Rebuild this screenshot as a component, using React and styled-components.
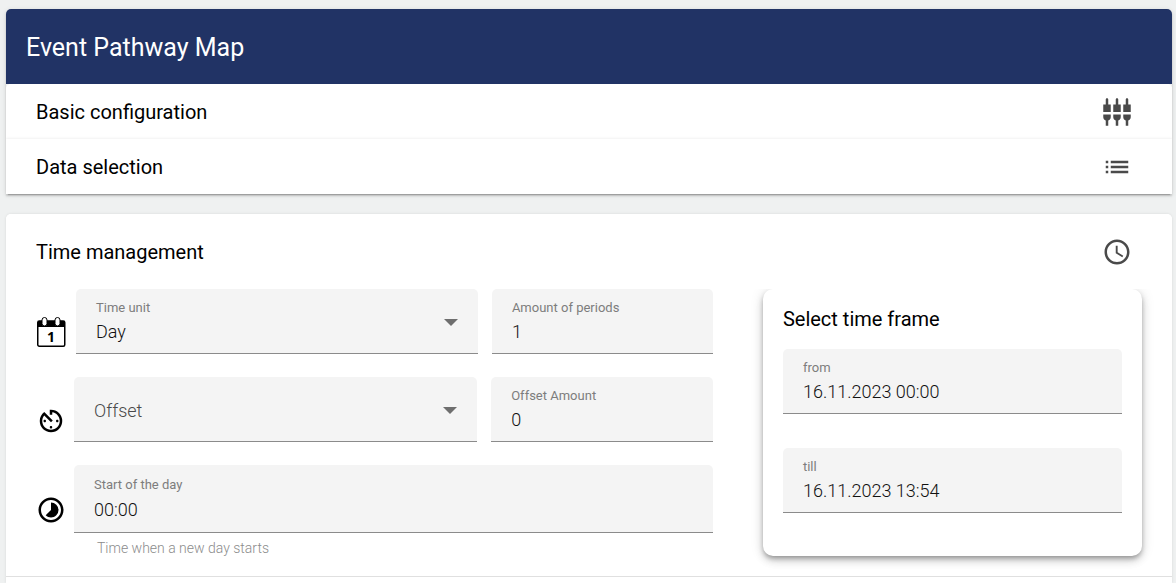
import React, { useState } from "react";
import styled, { createGlobalStyle } from "styled-components";
import {
  MdAvTimer,
  MdList,
  MdSchedule,
  MdSettingsInputComponent,
  MdTimelapse,
} from "react-icons/md";

const GlobalStyle = createGlobalStyle`
  * {
    box-sizing: border-box;
  }
  body {
    margin: 0;
    background: #eff1f1;
    color: #000;
    font-family: Roboto, "Liberation Sans", sans-serif;
  }
  button, input, select {
    font-family: inherit;
  }
`;

const Page = styled.main`
  display: flex;
  flex-direction: column;
  min-height: 100vh;
  padding: 9px 4px 0 6px;
`;

const elevation = `
  box-shadow: 0 3px 1px -2px rgba(0, 0, 0, 0.2), 0 2px 2px 0 rgba(0, 0, 0, 0.14),
    0 1px 5px 0 rgba(0, 0, 0, 0.12);
`;

const ConfigCard = styled.section`
  margin-bottom: 20px;
  border-radius: 5px 5px 0 0;
  ${elevation}
`;

const TitleBar = styled.header`
  padding: 23px 20px 20px;
  background: #213365;
  border-radius: 5px 5px 0 0;
  color: #fff;
`;

const Title = styled.h1`
  margin: 0;
  font-size: 25px;
  font-weight: 400;
  line-height: 32px;
`;

const PanelList = styled.div`
  overflow: hidden;
  background: #fff;
  border-radius: 5px 5px 0 0;
`;

const PanelHeader = styled.button`
  display: flex;
  align-items: center;
  justify-content: space-between;
  width: 100%;
  height: 55px;
  padding: 0 40px 0 30px;
  border: 0;
  background: #fff;
  color: #000;
  font-size: 20px;
  line-height: 32px;
  text-align: left;
  cursor: pointer;

  & + & {
    box-shadow: 0 0 3px rgba(0, 0, 0, 0.1);
  }
  svg {
    color: #4a4a4a;
  }
`;

const TimeCard = styled.section`
  flex: 1;
  padding-bottom: 6px;
  background: #fff;
  border-radius: 5px 5px 0 0;
  box-shadow: 0 0 3px rgba(0, 0, 0, 0.1);
`;

const TimeHeader = styled(PanelHeader)`
  height: 75px;
  border-radius: 5px 5px 0 0;
`;

const TimeBody = styled.div`
  display: grid;
  grid-template-columns: 25fr 14fr;
  gap: 50px;
  align-items: start;
  padding: 0 30px 18px;
  border-bottom: 1px solid #e0e0e0;
`;

const FieldRows = styled.div`
  display: grid;
  gap: 23px;
`;

const FieldRow = styled.div`
  display: flex;
  gap: 8px;
`;

const RowIcon = styled.span`
  display: flex;
  flex-shrink: 0;
  align-items: center;
  height: ${(p) => (p.$tall ? 68 : 65)}px;
  padding-top: 22px;
`;

const Fields = styled.div`
  display: grid;
  flex: 1;
  grid-template-columns: 20fr 11fr;
  gap: 14px;
  min-width: 0;
`;

const FieldBox = styled.div`
  position: relative;
  display: flex;
  flex-direction: column;
  justify-content: center;
  gap: ${(p) => (p.$tall ? 2 : 0)}px;
  min-width: 0;
  height: ${(p) => (p.$tall ? 68 : 65)}px;
  padding: 2px 20px 0;
  background: #f4f4f4;
  border-bottom: 1px solid #8b8b8b;
  border-radius: 5px 5px 0 0;
`;

const FieldLabel = styled.label`
  color: #7d7d7d;
  font-size: 13px;
  line-height: 18px;
`;

const FieldInput = styled.input`
  width: 100%;
  height: 28px;
  padding: 0;
  border: 0;
  outline: 0;
  background: transparent;
  color: #111;
  font-size: 18px;
  font-weight: 300;
`;

const FieldSelect = styled.select`
  width: 100%;
  height: 28px;
  padding: 0;
  border: 0;
  outline: 0;
  appearance: none;
  background: transparent;
  color: ${(p) => (p.$empty ? "#4a4a4a" : "#111")};
  font-size: 18px;
  font-weight: 300;
`;

const Arrow = styled.span`
  position: absolute;
  top: 30px;
  right: 20px;
  border: 7px solid transparent;
  border-top-color: #6e6e6e;
  border-bottom: 0;
  pointer-events: none;
`;

const Hint = styled.p`
  margin: 5px 0 0;
  padding: 0 23px;
  color: #8c8c8c;
  font-size: 14px;
  font-weight: 300;
  line-height: 20px;
`;

const DayStart = styled.div`
  flex: 1;
  min-width: 0;
`;

const FrameCard = styled.fieldset`
  display: grid;
  gap: 34px;
  min-width: 0;
  margin: 0;
  padding: 14px 20px 43px;
  border: 0;
  border-radius: 10px;
  box-shadow: 0 3px 5px -1px rgba(0, 0, 0, 0.3), 0 5px 8px 0 rgba(0, 0, 0, 0.14),
    0 1px 14px 0 rgba(0, 0, 0, 0.12);
  clip-path: inset(0 -20px -20px -20px);
`;

const FrameTitle = styled.legend`
  float: left;
  padding: 0;
  margin-bottom: -20px;
  font-size: 20px;
  line-height: 32px;
`;

function CalendarIcon() {
  return (
    <svg width="32" height="32" viewBox="0 0 32 32" aria-hidden="true">
      <rect x="1.75" y="4" width="27" height="25.25" rx="1.5" fill="#fff" stroke="#000" strokeWidth="1.5" />
      <path d="M2 4h27v6H2z" fill="#000" />
      <rect x="6" y="0.5" width="5" height="8.5" rx="2.5" fill="#fff" stroke="#000" strokeWidth="1" />
      <rect x="19" y="0.5" width="5" height="8.5" rx="2.5" fill="#fff" stroke="#000" strokeWidth="1" />
      <text x="15" y="25" textAnchor="middle" fontFamily="Open Sans, sans-serif" fontSize="14" fontWeight="700">
        1
      </text>
    </svg>
  );
}

function TextField({ id, label, value, tall }) {
  const [text, setText] = useState(value);
  return (
    <FieldBox $tall={tall}>
      <FieldLabel htmlFor={id}>{label}</FieldLabel>
      <FieldInput id={id} value={text} onChange={(e) => setText(e.target.value)} />
    </FieldBox>
  );
}

function App() {
  const [unit, setUnit] = useState("Day");
  const [offset, setOffset] = useState("");

  return (
    <>
      <GlobalStyle />
      <Page>
        <ConfigCard>
          <TitleBar>
            <Title>Event Pathway Map</Title>
          </TitleBar>
          <PanelList>
            <PanelHeader type="button">
              Basic configuration
              <MdSettingsInputComponent size={30} />
            </PanelHeader>
            <PanelHeader type="button">
              Data selection
              <MdList size={30} />
            </PanelHeader>
          </PanelList>
        </ConfigCard>

        <TimeCard>
          <TimeHeader type="button">
            Time management
            <MdSchedule size={30} />
          </TimeHeader>
          <TimeBody>
            <FieldRows>
              <FieldRow>
                <RowIcon>
                  <CalendarIcon />
                </RowIcon>
                <Fields>
                  <FieldBox>
                    <FieldLabel htmlFor="unit">Time unit</FieldLabel>
                    <FieldSelect id="unit" value={unit} onChange={(e) => setUnit(e.target.value)}>
                      <option>Day</option>
                    </FieldSelect>
                    <Arrow />
                  </FieldBox>
                  <TextField id="periods" label="Amount of periods" value="1" />
                </Fields>
              </FieldRow>

              <FieldRow>
                <RowIcon>
                  <MdAvTimer size={30} />
                </RowIcon>
                <Fields>
                  <FieldBox>
                    <FieldSelect
                      aria-label="Offset"
                      value={offset}
                      $empty={!offset}
                      onChange={(e) => setOffset(e.target.value)}
                    >
                      <option value="">Offset</option>
                    </FieldSelect>
                    <Arrow />
                  </FieldBox>
                  <TextField id="offsetAmount" label="Offset Amount" value="0" />
                </Fields>
              </FieldRow>

              <FieldRow>
                <RowIcon $tall>
                  <MdTimelapse size={30} />
                </RowIcon>
                <DayStart>
                  <TextField id="dayStart" label="Start of the day" value="00:00" tall />
                  <Hint>Time when a new day starts</Hint>
                </DayStart>
              </FieldRow>
            </FieldRows>

            <FrameCard>
              <FrameTitle>Select time frame</FrameTitle>
              <TextField id="from" label="from" value="16.11.2023 00:00" />
              <TextField id="till" label="till" value="16.11.2023 13:54" />
            </FrameCard>
          </TimeBody>
        </TimeCard>
      </Page>
    </>
  );
}

export default App;
